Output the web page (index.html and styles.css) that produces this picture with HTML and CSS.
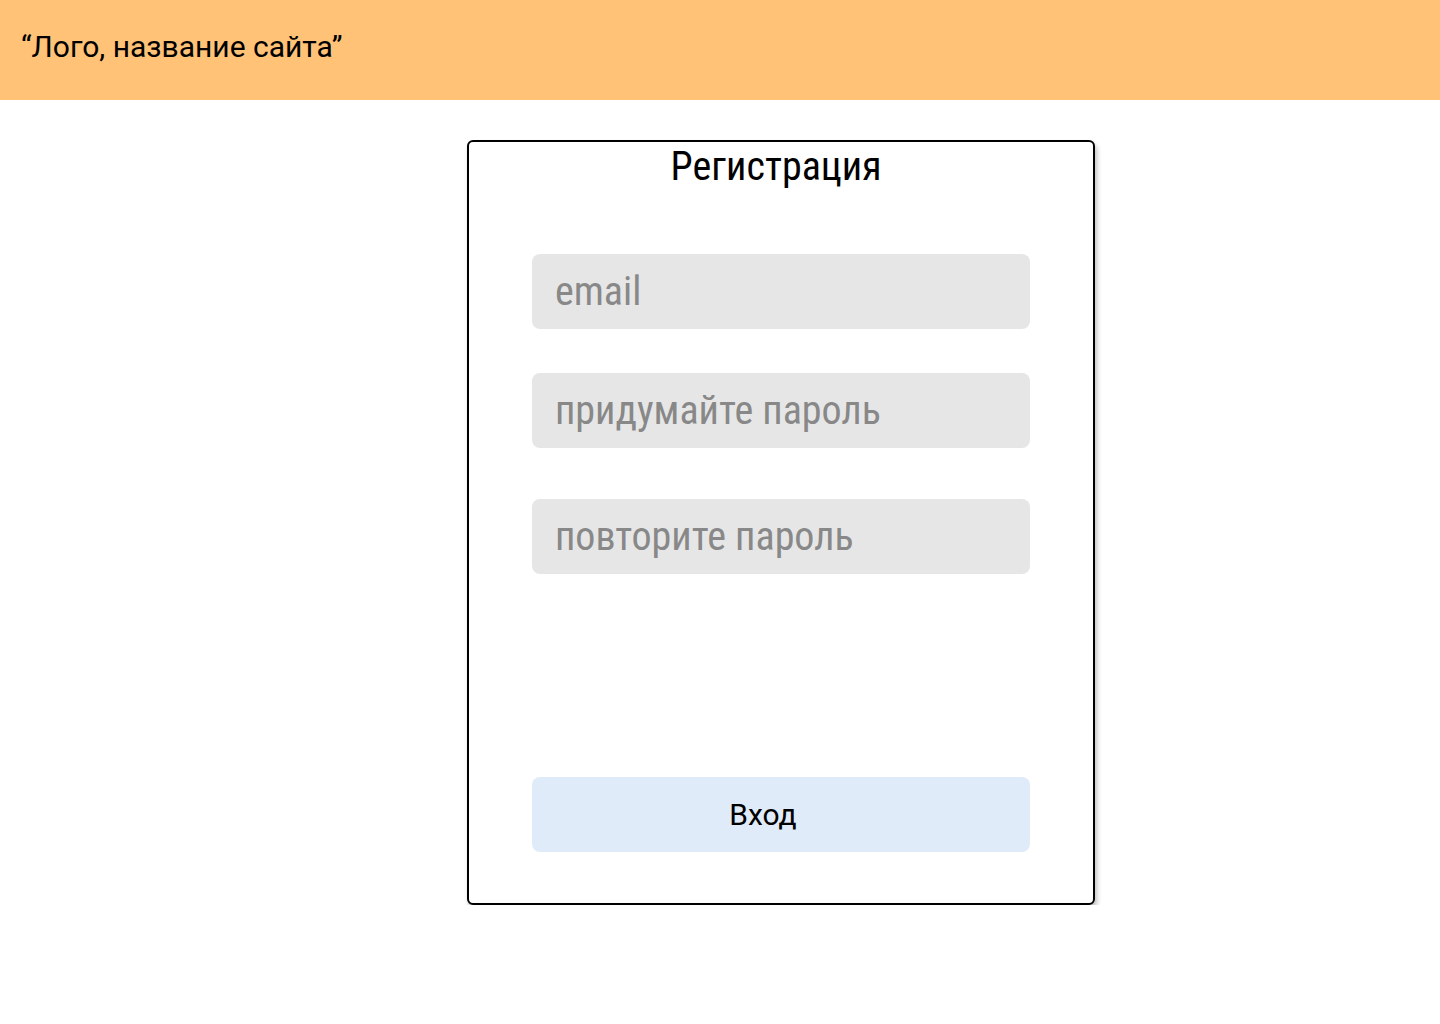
FILE: index.html
```html
<!DOCTYPE html>
<html lang="ru">
<head>
<meta charset="utf-8">
<title>Регистрация</title>
<link rel="stylesheet" href="styles.css">
</head>
<body>
<header class="topbar">
  <span class="logo">“Лого, название сайта”</span>
</header>
<main class="main">
  <form class="card">
    <h1 class="card-title">Регистрация</h1>
    <input class="field field-email" type="email" placeholder="email">
    <input class="field field-pass" type="password" placeholder="придумайте пароль">
    <input class="field field-repeat" type="password" placeholder="повторите пароль">
    <button class="submit" type="button">Вход</button>
  </form>
</main>
</body>
</html>
```
FILE: styles.css
```css
* { box-sizing: border-box; }
html, body { margin: 0; padding: 0; background: #fff; }
body { font-family: Roboto, "Noto Sans", sans-serif; color: #000; }

.topbar {
  height: 100px;
  background: #FFC277;
  display: flex;
  align-items: center;
  padding-left: 21px;
}
.logo {
  font-size: 30px;
  line-height: 34px;
  margin-top: -6px;
}

.main {
  padding-top: 40px;
  padding-left: 467px;
}

.card {
  width: 628px;
  height: 765px;
  border: 2px solid #000;
  border-radius: 6px;
  box-shadow: 2px 4px 5px rgba(0,0,0,0.25);
  padding: 0 63px;
  display: flex;
  flex-direction: column;
  background: #fff;
}
.card-title {
  margin: 2px 0 0 -10px;
  text-align: center;
  font-weight: 400;
  font-size: 40px;
  line-height: 46px;
  font-stretch: 75%;
}
.field {
  display: block;
  width: 498px;
  height: 75px;
  border: 0;
  border-radius: 8px;
  background: #E6E6E6;
  padding: 0 23px;
  font-family: Roboto, sans-serif;
  font-size: 40px;
  font-stretch: 75%;
  color: #888;
  outline: none;
}
.field::placeholder { color: #888; opacity: 1; }
.field-email { margin-top: 64px; }
.field-pass { margin-top: 44px; }
.field-repeat { margin-top: 51px; }
.submit {
  margin-top: 203px;
  width: 498px;
  height: 75px;
  border: 0;
  border-radius: 8px;
  background: #DFEBF8;
  font-family: Roboto, sans-serif;
  font-size: 30px;
  color: #000;
  padding: 0 36px 0 0;
}
```
